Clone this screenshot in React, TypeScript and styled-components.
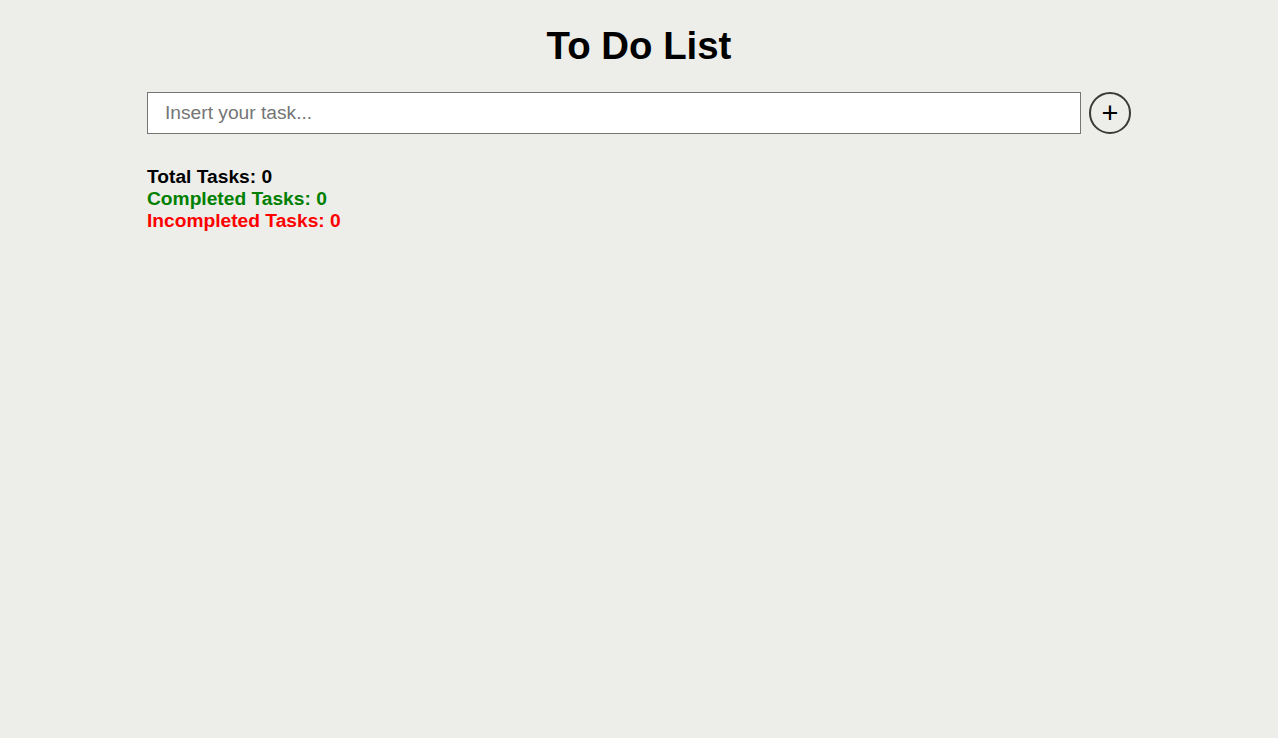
import React from "react";
import styled, { createGlobalStyle } from "styled-components";

const Global = createGlobalStyle`
  html, body { margin: 0; padding: 0; background: #edede9; }
  body { font-family: "Liberation Sans", Arial, sans-serif; color: #000; }
`;

const Page = styled.main`
  width: 984px;
  margin: 0 auto;
  padding-top: 23px;
`;

const Title = styled.h1`
  margin: 0;
  text-align: center;
  font-size: 38.4px;
  line-height: 46px;
  font-weight: 700;
`;

const Form = styled.form`
  display: flex;
  align-items: center;
  gap: 8px;
  margin-top: 23px;
`;

const Input = styled.input`
  flex: 1;
  height: 42px;
  box-sizing: border-box;
  border: 1px solid #767676;
  background: #fff;
  padding: 0 17px;
  font-family: "Liberation Sans", Arial, sans-serif;
  font-size: 19.2px;
  outline: none;
  &::placeholder { color: #757575; }
`;

const AddButton = styled.button`
  width: 42px;
  height: 42px;
  box-sizing: border-box;
  border-radius: 50%;
  border: 2px solid #3a3a3a;
  background: transparent;
  display: flex;
  align-items: center;
  justify-content: center;
  padding: 0;
  cursor: pointer;
  font-family: "Liberation Sans", Arial, sans-serif;
  font-size: 29px;
  line-height: 1;
  color: #000;
`;

const Stats = styled.div`
  margin-top: 32px;
  display: flex;
  flex-direction: column;
`;

const Stat = styled.span<{ $color: string }>`
  font-size: 19.2px;
  line-height: 22px;
  font-weight: 700;
  color: ${(p) => p.$color};
`;

export default function App() {
  return (
    <>
      <Global />
      <Page>
        <Title>To Do List</Title>
        <Form onSubmit={(e) => e.preventDefault()}>
          <Input placeholder="Insert your task..." />
          <AddButton type="submit" aria-label="Add task">+</AddButton>
        </Form>
        <Stats>
          <Stat $color="#000">Total Tasks: 0</Stat>
          <Stat $color="#008000">Completed Tasks: 0</Stat>
          <Stat $color="#ff0000">Incompleted Tasks: 0</Stat>
        </Stats>
      </Page>
    </>
  );
}
